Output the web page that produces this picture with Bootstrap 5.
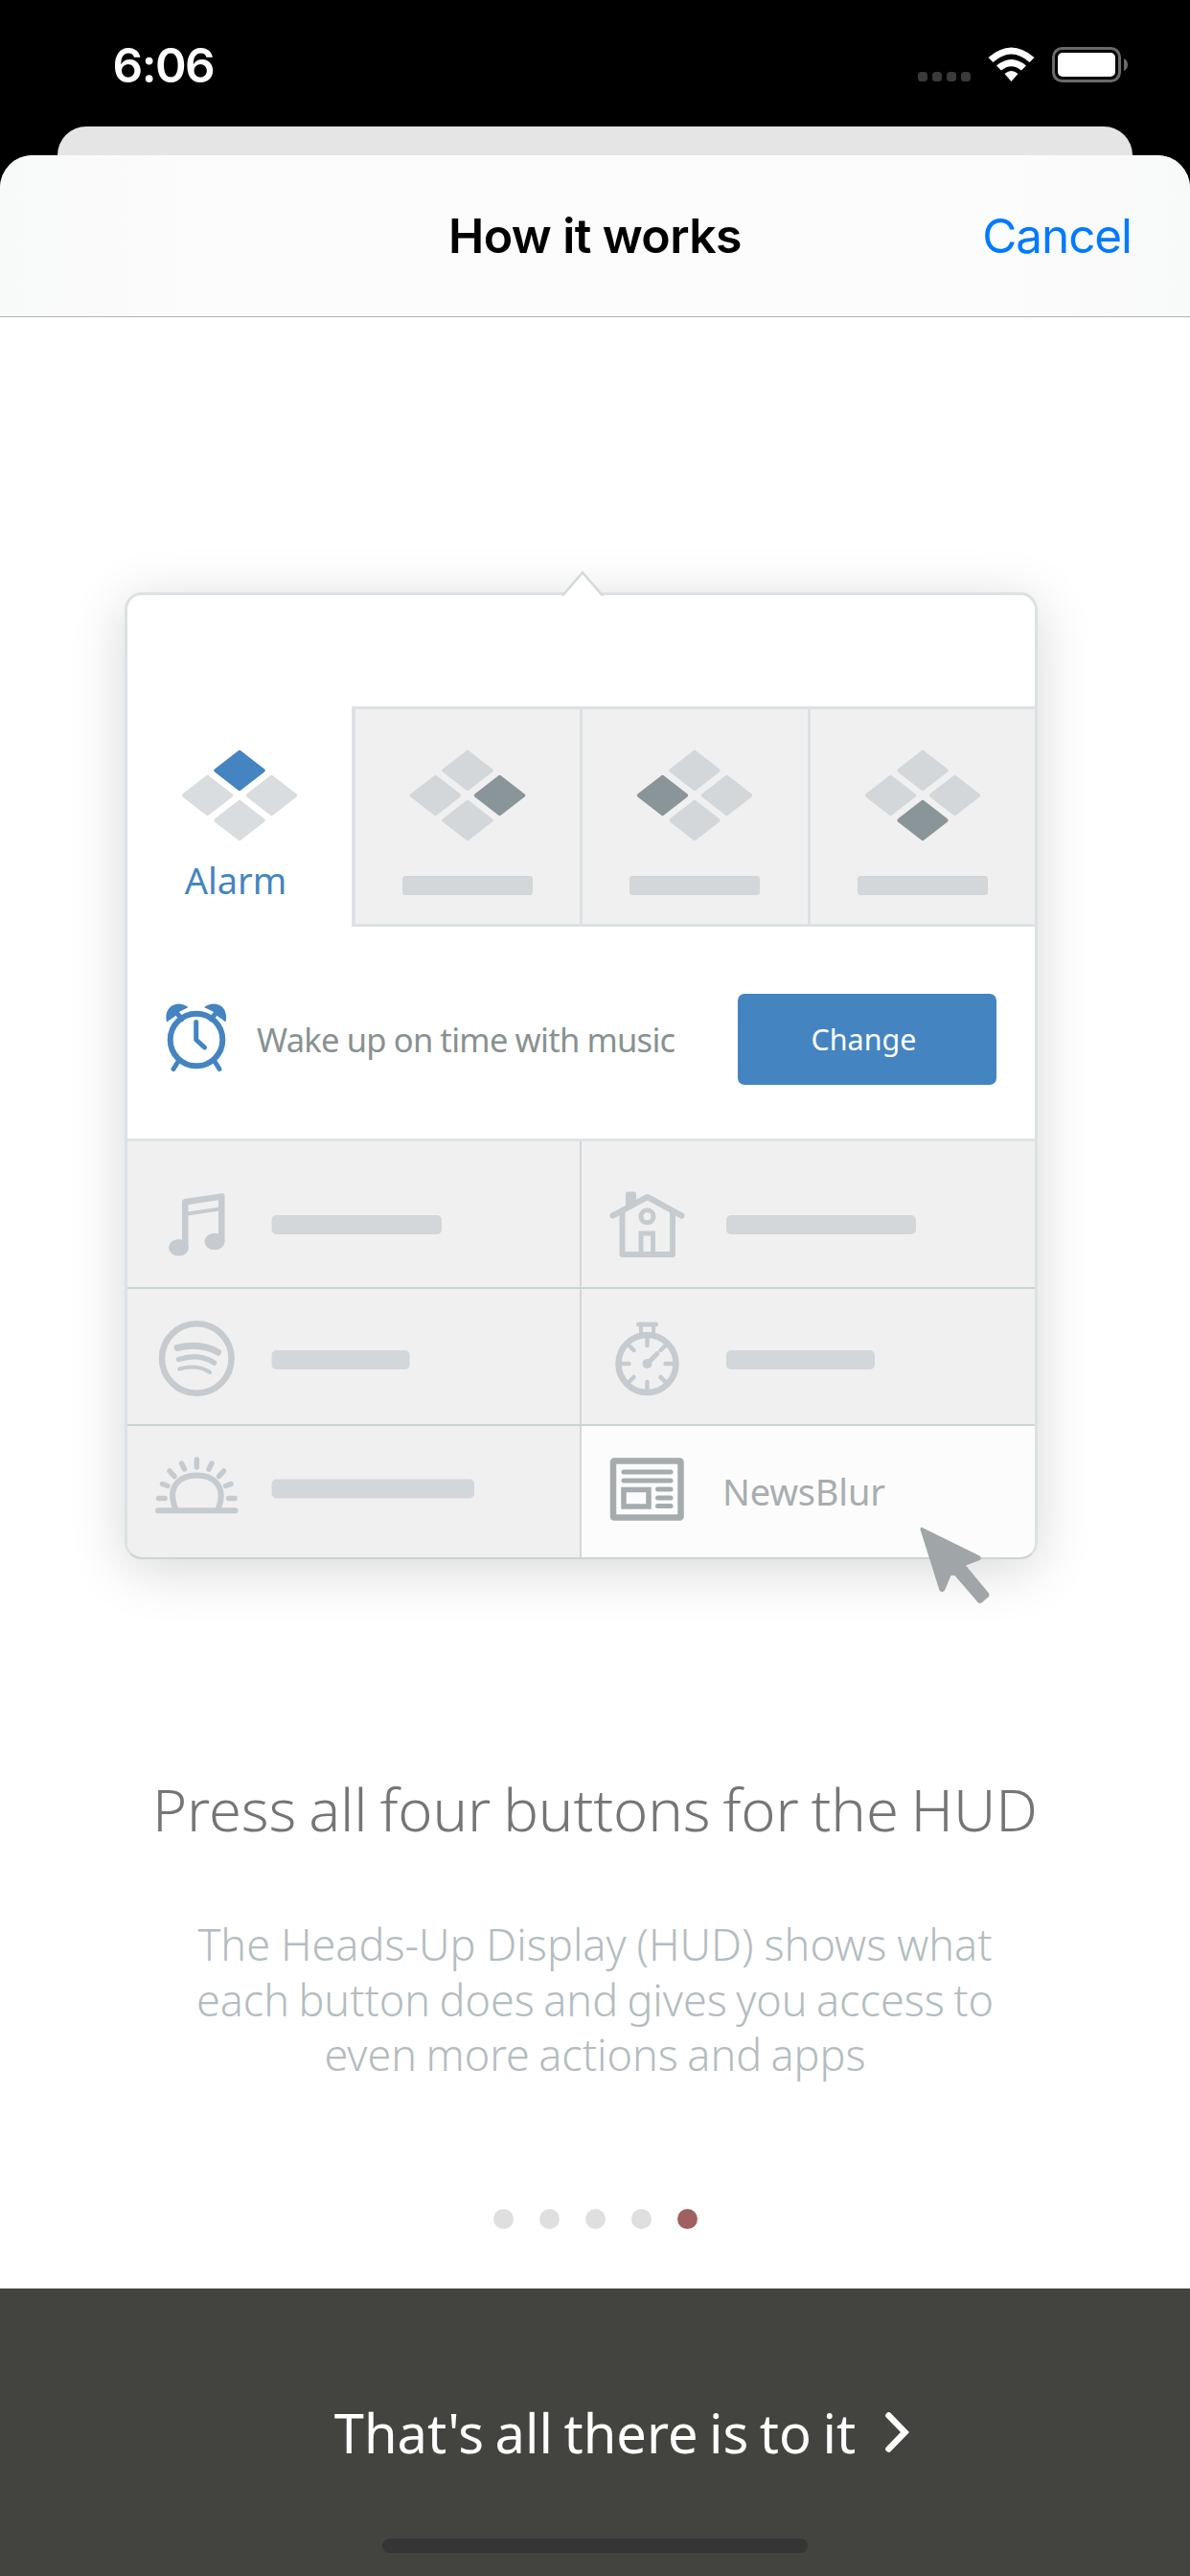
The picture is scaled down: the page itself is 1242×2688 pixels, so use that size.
<!DOCTYPE html>
<html lang="en">
<head>
<meta charset="utf-8">
<meta name="viewport" content="width=device-width, initial-scale=1">
<title>How it works</title>
<link rel="stylesheet" href="https://cdn.jsdelivr.net/npm/bootstrap@5.3.0/dist/css/bootstrap.min.css">
<style>
body{width:1242px;height:2688px;overflow:hidden;font-family:"Noto Sans","Open Sans",sans-serif}
svg{display:block;flex:none}
.ios{font-family:Inter,"Liberation Sans",sans-serif}
.statusbar{height:132px;padding:0 65px 0 117.5px}
.clock{font-size:49.5px;font-weight:600;line-height:60px;margin-top:38px;letter-spacing:-1.5px}
.status-icons{margin-top:48px}
.sheet-back{height:30px;margin:0 60px;background:#e5e5e5;border-radius:32px 32px 0 0}
.sheet{height:2526px;border-radius:34px 34px 0 0;overflow:hidden;background:#fff}
.titlebar{height:169px;border-bottom:1px solid #b2b2b2;background:linear-gradient(90deg,#f8f9f9 0,#fafafa 130px,#fcfcfc 185px,#fcfcfc 1060px,#fafafa 1130px,#f8f9f9 100%)}
.titlebar .side{width:220px}
.titlebar h1{font-size:50px;font-weight:600;line-height:60px;letter-spacing:-.6px;color:#000}
.titlebar a{font-size:49.5px;line-height:60px;color:#007aff;letter-spacing:-1.1px;margin-right:13px}
.stage{padding:287px 0 0 130px}
.hud{width:953px;height:1009px;border:3px solid #dce2e4;border-bottom-color:#cbd4d6;border-radius:18px;background:#fff;box-shadow:0 10px 58px rgba(0,0,0,.16)}
.hud-arrow{left:453px;top:-26px}
.hud-inner{border-radius:15px;overflow:hidden}
.hud-head{height:116px}
.tabs-row{height:230px}
.tab-on{width:234px;padding-top:45px}
.tab-off{border:3px solid #dce2e4;border-right:0;border-left-width:4px;background:#f0f0f0;padding-top:42px}
.tab-off+.tab-off{border-left-width:3px}
.tab-name{font-size:38px;line-height:50px;color:#4484c1;margin-top:15px;margin-right:8px}
.barline{height:20px;border-radius:5px;background:#d3d7da}
.tab-off .barline{width:136px;margin-top:36px;border-radius:3px}
.wake{height:221px;padding:14px 40px 0 37px}
.wake-text{font-size:34.5px;line-height:48px;color:#899191;margin-left:28px;letter-spacing:-.7px;word-spacing:-.4px}
.btn-change{width:270px;height:95px;border-radius:7px;background:#4484c1;color:#fff;font-size:30.5px;border:0}
.btn-change span{margin-right:7px}
.cells{border-top:3px solid #dfe4e6}
.cell{background:#f0f0f0}
.cell:nth-child(odd){border-right:2px solid #d1d7da;width:474px}
.cell:nth-child(even){width:473px}
.r1{height:152px}
.r2{height:143px;border-top:2px solid #cbd4d5}
.r3{height:139px;border-top:2px solid #cbd4d5}
.cell.hot{background:#fcfcfc}
.news{font-size:38px;line-height:50px;color:#a9adaf;margin-top:43px;letter-spacing:-.2px}
.pointer{left:824px;top:968px}
.h-main{font-size:61.5px;font-weight:300;line-height:80px;color:#757575;word-spacing:-3px;letter-spacing:-.1px;margin-top:220px}
.p-main{font-size:45px;font-weight:300;line-height:57.6px;color:#b4bcc0;word-spacing:-2.4px;margin-top:73px}
.p-main .l1{word-spacing:-.8px}
.pager{gap:27px;margin-bottom:62px}
.pager i{width:21px;height:21px;border-radius:50%;background:#dfdfdf}
.pager i.on{background:#a06060}
.foot{height:300px;background:#43433f;color:#fff}
.foot-btn{font-size:56px;line-height:76px;margin-top:112px;gap:30px;padding-left:56px;word-spacing:-3px}
.foot-btn svg{margin-top:16px}
.homebar{width:444px;height:15px;border-radius:8px;background:#353535;margin-bottom:24px}
</style>
</head>
<body class="bg-black">
<div class="statusbar d-flex justify-content-between align-items-start text-white ios">
  <div class="clock">6:06</div>
  <svg class="status-icons" width="220" height="40" viewBox="957 48 220 40">
    <g fill="#3a3a3a"><rect x="958" y="75" width="10" height="10" rx="3.5"/><rect x="973" y="75" width="10" height="10" rx="3.5"/><rect x="988" y="75" width="10" height="10" rx="3.5"/><rect x="1003" y="75" width="10" height="10" rx="3.5"/></g>
    <g fill="#fff"><path d="M1031.500 60Q1055.500 39 1079.500 60L1074.500 65Q1055.500 48 1036.500 65Z"/><path d="M1040 68.500Q1055.500 55.500 1071 68.500L1066 73.500Q1055.500 65 1045 73.500Z"/><path d="M1048.500 77Q1055.500 71 1062.500 77L1055.500 85Z"/></g>
    <rect x="1099.500" y="50.500" width="69" height="34" rx="9" fill="none" stroke="#6a6a6a" stroke-width="3"/>
    <rect x="1104" y="55" width="60" height="25" rx="5" fill="#fff"/><path d="M1173 61Q1177 63 1177 67.500T1173 74Z" fill="#6a6a6a"/>
  </svg>
</div>
<div class="sheet-back"></div>
<main class="sheet d-flex flex-column">
  <header class="titlebar ios d-flex align-items-center justify-content-between px-5">
    <span class="side"></span><h1 class="m-0">How it works</h1><span class="side text-end"><a href="#" class="text-decoration-none">Cancel</a></span>
  </header>
  <section class="stage">
    <div class="hud position-relative">
      <div class="hud-inner">
        <div class="hud-head"></div>
        <div class="tabs-row d-flex">
          <div class="tab-on d-flex flex-column align-items-center">
            <svg width="122" height="96" viewBox="-61 -48 122 96" fill="#d9dde0"><defs><path id="dm" d="M-26 -1.500L-1.500 -20.500Q0 -22 1.500 -20.500L26 -1.500Q27.500 0 26 1.500L1.500 20.500Q0 22 -1.500 20.500L-26 1.500Q-27.500 0 -26 -1.500Z"/></defs><use href="#dm" y="-26" fill="#4484c1"/><use href="#dm" x="-33.500"/><use href="#dm" x="33.500"/><use href="#dm" y="26"/></svg>
            <div class="tab-name">Alarm</div>
          </div>
          <div class="tab-off flex-fill d-flex flex-column align-items-center"><svg width="122" height="96" viewBox="-61 -48 122 96" fill="#d3d7da"><use href="#dm" y="-26"/><use href="#dm" x="-33.500"/><use href="#dm" x="33.500" fill="#8a9599"/><use href="#dm" y="26"/></svg><div class="barline"></div></div>
          <div class="tab-off flex-fill d-flex flex-column align-items-center"><svg width="122" height="96" viewBox="-61 -48 122 96" fill="#d3d7da"><use href="#dm" y="-26"/><use href="#dm" x="-33.500" fill="#8a9599"/><use href="#dm" x="33.500"/><use href="#dm" y="26"/></svg><div class="barline"></div></div>
          <div class="tab-off flex-fill d-flex flex-column align-items-center"><svg width="122" height="96" viewBox="-61 -48 122 96" fill="#d3d7da"><use href="#dm" y="-26"/><use href="#dm" x="-33.500"/><use href="#dm" x="33.500"/><use href="#dm" y="26" fill="#8a9599"/></svg><div class="barline"></div></div>
        </div>
        <div class="wake d-flex align-items-center">
          <svg width="70" height="76" viewBox="170 1046.500 70 76" fill="none" stroke="#4484c1" stroke-linecap="round"><circle cx="205" cy="1084.500" r="27.300" stroke-width="6"/><path d="M204.700 1066V1084.500L213.500 1092.500" stroke-width="5" stroke-linejoin="round"/><path d="M186 1107L181 1115M224 1107L229 1115M184 1056L190 1063M226 1056L220 1063" stroke-width="5"/><path d="M174 1066C170 1049 186 1042 196.500 1050.500L187 1055.500L184 1059Z" fill="#4484c1" stroke="none"/><path d="M235.500 1066C239.500 1049 224 1042 213 1050.500L223 1055.500L226 1059Z" fill="#4484c1" stroke="none"/></svg>
          <span class="wake-text text-nowrap">Wake up on time with music</span>
          <button class="btn btn-change ms-auto p-0"><span>Change</span></button>
        </div>
        <div class="cells d-flex flex-wrap">
          <div class="cell r1"><svg width="472" height="152" viewBox="133 1191 472 152"><g fill="#c6cbcf"><ellipse cx="186.500" cy="1301.800" rx="10.500" ry="8.800"/><ellipse cx="224" cy="1295.500" rx="10.500" ry="8.800"/><path d="M190 1302V1254Q190 1251.500 192.500 1251L231 1245.300Q234.500 1245 234.500 1248V1296H228V1252.300L196.500 1257V1302ZM196 1264.500L229 1259.500V1263.500L196 1268.500Z"/></g><rect x="283.500" y="1268" width="177.500" height="20" rx="5" fill="#d3d7da"/></svg></div>
          <div class="cell r1"><svg width="473" height="152" viewBox="607 1191 473 152"><g fill="none" stroke="#c6cbcf" stroke-width="6" stroke-linejoin="round" stroke-linecap="round"><path d="M639.500 1268.500L675.700 1249L711.500 1268.500"/><path d="M649.500 1264V1309H702V1264"/><path d="M669 1308V1287H681.500V1308" stroke-width="5" stroke-linejoin="miter"/><circle cx="675.500" cy="1269.300" r="6.500" stroke-width="5"/></g><path d="M653 1261V1246Q653 1243.500 655.500 1243.500H661.500Q664 1243.500 664 1246V1255Z" fill="#c6cbcf"/><rect x="758" y="1268" width="198" height="20" rx="5" fill="#d3d7da"/></svg></div>
          <div class="cell r2"><svg width="472" height="141" viewBox="133 1345 472 141"><g fill="none" stroke="#c6cbcf" stroke-linecap="round"><circle cx="205.300" cy="1417.500" r="36.300" stroke-width="6.500"/><path d="M185 1406.500Q209 1400.500 227.500 1411" stroke-width="7"/><path d="M186.500 1418.500Q208 1411.500 223.500 1422" stroke-width="5.500"/><path d="M187 1428.500Q206 1423 219 1432" stroke-width="4"/></g><rect x="283.500" y="1409" width="144" height="20" rx="5" fill="#d3d7da"/></svg></div>
          <div class="cell r2"><svg width="473" height="141" viewBox="607 1345 473 141"><g fill="none" stroke="#c6cbcf"><circle cx="675.500" cy="1423" r="30" stroke-width="6.500"/><path d="M675.500 1396v8M675.500 1442v8M648.500 1423h8M694.500 1423h8M656.500 1404l5 5M694.500 1404l-5 5M656.500 1442l5 -5M694.500 1442l-5 -5" stroke-width="4.500" stroke-linecap="round"/><path d="M666.500 1382H684.500" stroke-width="5" stroke-linecap="round"/><path d="M669 1383V1393M682 1383V1393" stroke-width="4"/><path d="M675.500 1423L686 1412.500" stroke-width="5" stroke-linecap="round"/></g><circle cx="675.500" cy="1423" r="5" fill="#c6cbcf"/><rect x="758" y="1409" width="155" height="20" rx="5" fill="#d3d7da"/></svg></div>
          <div class="cell r3"><svg width="472" height="136" viewBox="133 1488 472 136"><g fill="none" stroke="#c6cbcf" stroke-width="6"><path d="M165 1576.300H245.500" stroke-linecap="round"/><path d="M183.500 1575C173 1550 189 1539.500 205.300 1539.500S237.500 1550 227.500 1575"/><g stroke-width="5.500" stroke-linecap="round"><path d="M205.300 1523V1531M189.500 1527L192.500 1533M221 1527L218 1533M177 1535L182 1540.500M233.500 1535L228.500 1540.500M169.500 1548.500L175 1550.500M241 1548.500L235.500 1550.500M165.500 1563.500H172M238.500 1563.500H245"/></g></g><rect x="283.500" y="1543.500" width="211.500" height="20" rx="5" fill="#d3d7da"/></svg></div>
          <div class="cell r3 hot d-flex align-items-start">
            <svg width="147" height="136" viewBox="607 1488 147 136" fill="none" stroke="#a6abae"><rect x="640" y="1524.500" width="70.500" height="59" stroke-width="6.500" rx="1"/><path d="M651 1536H700M651 1545H700M686.500 1554H700M686.500 1563H700M686.500 1571.500H700" stroke-width="5" stroke-linecap="round"/><rect x="651" y="1554.500" width="26" height="17.500" stroke-width="5.500"/></svg>
            <span class="news">NewsBlur</span>
          </div>
        </div>
      </div>
      <svg class="hud-arrow position-absolute" width="44" height="28" viewBox="584.500 595 44 28"><path d="M585 623.500V620.500L606.500 597.500L628 620.500V623.500Z" fill="#fff"/><path d="M585 620.500H586.500L606.500 597.500L626.500 620.500H628.500" fill="none" stroke="#d3dadb" stroke-width="2.500"/></svg>
      <svg class="pointer position-absolute" width="80" height="86" viewBox="957 1589 80 86"><path d="M962.500 1594L1022.500 1623.500Q1025 1626 1022.500 1628L1008 1633.500L1032 1662.500Q1033 1664.500 1032 1666L1024.500 1672.500Q1022.500 1673.500 1020.500 1672L996.500 1644H992.500L986 1659.500Q983 1662.500 980.500 1659.500L960.500 1596Q960.500 1593 962.500 1594Z" fill="#a0a6a8"/></svg>
    </div>
  </section>
  <section class="text-center">
    <h2 class="h-main mb-0">Press all four buttons for the HUD</h2>
    <p class="p-main mb-0"><span class="l1">The Heads-Up Display (HUD) shows what</span><br>each button does and gives you access to<br>even more actions and apps</p>
  </section>
  <div class="pager d-flex justify-content-center mt-auto"><i></i><i></i><i></i><i></i><i class="on"></i></div>
  <footer class="foot d-flex flex-column align-items-center flex-shrink-0">
    <div class="foot-btn d-flex"><span>That's all there is to it</span><svg width="26" height="44" viewBox="923 2516 26 44"><path d="M927.500 2520.500L944.500 2538L927.500 2555.500" fill="none" stroke="#fff" stroke-width="6.500" stroke-linecap="round"/></svg></div>
    <div class="homebar mt-auto"></div>
  </footer>
</main>
<script src="https://cdn.jsdelivr.net/npm/bootstrap@5.3.0/dist/js/bootstrap.bundle.min.js"></script>
</body>
</html>
